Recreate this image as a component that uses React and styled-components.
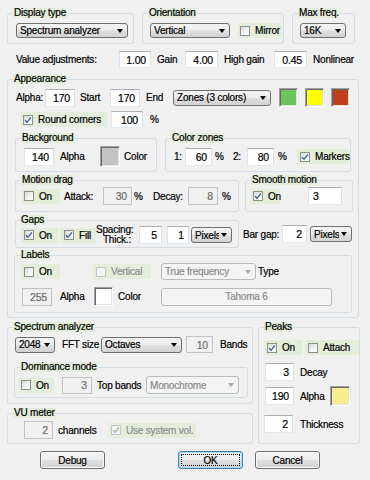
import React from 'react'
import styled, { createGlobalStyle } from 'styled-components'

const GlobalStyle = createGlobalStyle`
	html, body {
		margin: 0;
		padding: 0;
		background: #f0f0f0;
	}
	body {
		font-family: "Liberation Sans", Arial, sans-serif;
		font-size: 10px;
		letter-spacing: -0.2px;
		color: #000;
		-webkit-text-stroke: 0.2px currentColor;
	}
`

const Dialog = styled.div`
	width: 370px;
	height: 480px;
	box-sizing: border-box;
	padding: 8px 0 0 7px;
	background: #f0f0f0;
	display: flex;
	flex-direction: column;
	overflow: hidden;
`

const Line = styled.div`
	display: flex;
	align-items: ${p => p.$align || 'center'};
	margin-top: ${p => p.$top || 0}px;
	margin-left: ${p => p.$left || 0}px;
	height: ${p => (p.$h ? `${p.$h}px` : 'auto')};
	flex: none;
`

const Stack = styled.div`
	display: flex;
	flex-direction: column;
	flex: none;
`

const Group = styled.fieldset`
	box-sizing: border-box;
	flex: none;
	width: ${p => p.$w}px;
	min-width: 0;
	margin: ${p => p.$top || 0}px 0 0 ${p => p.$left || 0}px;
	padding: 0 0 ${p => p.$bottom || 0}px 0;
	border: 1px solid #d5dde4;
	border-radius: 3px;
`

const Caption = styled.legend`
	margin-left: ${p => p.$left ?? 5}px;
	padding: 0 1px;
	height: 10px;
	line-height: 10px;
	background: #e3edda;
	white-space: nowrap;
`

const Text = styled.span`
	flex: none;
	width: ${p => (p.$w ? `${p.$w}px` : 'auto')};
	margin-left: ${p => p.$ml || 0}px;
	white-space: nowrap;
	color: ${p => (p.$muted ? '#8d8d8d' : '#000')};
	text-align: ${p => (p.$right ? 'right' : 'left')};
`

const TwoLine = styled.span`
	flex: none;
	width: ${p => p.$w}px;
	line-height: 10px;
	text-align: right;
	white-space: nowrap;
`

const Field = styled.div`
	box-sizing: border-box;
	flex: none;
	width: ${p => p.$w}px;
	height: ${p => p.$h || 18}px;
	margin-left: ${p => p.$ml || 0}px;
	display: flex;
	align-items: center;
	justify-content: ${p => (p.$start ? 'flex-start' : 'flex-end')};
	padding: 0 4px;
	background: ${p => (p.$disabled ? '#f0f0f0' : '#fff')};
	color: ${p => (p.$disabled ? '#6d6d6d' : '#000')};
	border: 1px solid;
	border-color: ${p => (p.$disabled ? '#c2c2c2' : '#abadb3 #dbdfe6 #e3e9ef #e2e3ea')};
	font-size: 10.5px;
`

const Combo = styled.div`
	box-sizing: border-box;
	flex: none;
	width: ${p => p.$w}px;
	height: ${p => p.$h || 16}px;
	margin-left: ${p => p.$ml || 0}px;
	display: flex;
	align-items: center;
	padding: 0 4px 0 3px;
	border: 1px solid ${p => (p.$disabled ? '#b6bbbe' : '#707070')};
	border-radius: 3px;
	background: ${p =>
		p.$disabled
			? '#f4f4f4'
			: 'linear-gradient(#f4f4f4 0%, #ececec 48%, #dfdfdf 52%, #d2d2d2 100%)'};
	color: ${p => (p.$disabled ? '#8a8a8a' : '#000')};
`

const ComboText = styled.span`
	flex: 1;
	overflow: hidden;
	white-space: nowrap;
`

const Arrow = styled.span`
	flex: none;
	width: 0;
	height: 0;
	margin-left: 2px;
	border-left: 3.5px solid transparent;
	border-right: 3.5px solid transparent;
	border-top: 4px solid ${p => (p.$disabled ? '#a6a6a6' : '#000')};
`

const Check = styled.div`
	box-sizing: border-box;
	flex: none;
	width: ${p => p.$w}px;
	height: 15px;
	margin-left: ${p => p.$ml || 0}px;
	padding-left: ${p => p.$pad ?? 3}px;
	display: flex;
	align-items: center;
	background: #e3edda;
	color: ${p => (p.$disabled ? '#8d8d8d' : '#000')};
	white-space: nowrap;
`

const Box = styled.span`
	box-sizing: border-box;
	flex: none;
	width: 10px;
	height: 10px;
	margin-right: 5px;
	display: flex;
	align-items: center;
	justify-content: center;
	border: 1px solid ${p => (p.$disabled ? '#c4c4c4' : '#8e8f8f')};
	background: ${p =>
		p.$disabled ? '#f4f4f4' : 'linear-gradient(135deg, #d8d8d8 0%, #f4f4f4 60%, #ffffff 100%)'};
`

const Swatch = styled.div`
	box-sizing: border-box;
	flex: none;
	width: ${p => p.$w || 19}px;
	height: ${p => p.$h || 19}px;
	margin-left: ${p => p.$ml || 0}px;
	background: ${p => p.$color};
	border: 1px solid;
	border-color: #a0a0a0 #ffffff #ffffff #a0a0a0;
	box-shadow: inset 1px 1px 0 #696969, inset -1px -1px 0 #e3e3e3;
`

const FontButton = styled.div`
	box-sizing: border-box;
	flex: none;
	width: ${p => p.$w}px;
	height: 18px;
	margin-left: ${p => p.$ml || 0}px;
	display: flex;
	align-items: center;
	justify-content: center;
	border: 1px solid #b6bbbe;
	border-radius: 3px;
	background: #f4f4f4;
	color: #8a8a8a;
`

const PushButton = styled.button`
	box-sizing: border-box;
	flex: none;
	width: 65px;
	height: 18px;
	margin-left: ${p => p.$ml || 0}px;
	padding: 0;
	font: inherit;
	letter-spacing: inherit;
	color: #000;
	border: 1px solid ${p => (p.$default ? '#3c7fb1' : '#707070')};
	border-radius: 3px;
	background: linear-gradient(#f4f4f4 0%, #ececec 48%, #dfdfdf 52%, #d2d2d2 100%);
	box-shadow: inset 0 0 0 1px ${p => (p.$default ? '#a6dcf5' : '#fbfbfb')};
	outline: ${p => (p.$default ? '1px dotted #000' : 'none')};
	outline-offset: -4px;
`

const Tick = ({ muted }) => (
	<svg width="8" height="8" viewBox="0 0 8 8">
		<path
			d="M1.1 4.2 L3 6.3 L6.9 1.5"
			fill="none"
			stroke={muted ? '#b0b0b0' : '#3d5d95'}
			strokeWidth="1.3"
		/>
	</svg>
)

const CheckBox = ({ checked, disabled, children, ...rest }) => (
	<Check $disabled={disabled} {...rest}>
		<Box $disabled={disabled}>{checked && <Tick muted={disabled} />}</Box>
		{children}
	</Check>
)

const Select = ({ children, disabled, ...rest }) => (
	<Combo $disabled={disabled} {...rest}>
		<ComboText>{children}</ComboText>
		<Arrow $disabled={disabled} />
	</Combo>
)

const App = () => {
	return (
		<>
			<GlobalStyle />
			<Dialog>
				<Line $align="flex-start">
					<Group $w={127} $bottom={5}>
						<Caption>Display type</Caption>
						<Line $top={5} $left={8}>
							<Select $w={112} $h={15}>Spectrum analyzer</Select>
						</Line>
					</Group>
					<Group $w={142} $left={8} $bottom={5}>
						<Caption>Orientation</Caption>
						<Line $top={5} $left={7}>
							<Select $w={80} $h={15}>Vertical</Select>
							<CheckBox $w={44} $ml={8} $pad={2}>Mirror</CheckBox>
						</Line>
					</Group>
					<Group $w={63} $left={8} $bottom={5}>
						<Caption>Max freq.</Caption>
						<Line $top={5} $left={7}>
							<Select $w={46} $h={15}>16K</Select>
						</Line>
					</Group>
				</Line>

				<Line $top={7} $left={9} $h={17}>
					<Text $w={103}>Value adjustments:</Text>
					<Field $w={32} $h={17}>1.00</Field>
					<Text $w={28} $ml={6}>Gain</Text>
					<Field $w={33} $h={17}>4.00</Field>
					<Text $w={50} $ml={6}>High gain</Text>
					<Field $w={33} $h={17}>0.45</Field>
					<Text $ml={6}>Nonlinear</Text>
				</Line>

				<Group $w={352} $top={6} $bottom={4}>
					<Caption>Appearance</Caption>

					<Line $top={4} $left={8} $h={19}>
						<Text $w={29}>Alpha:</Text>
						<Field $w={30}>170</Field>
						<Text $w={30} $ml={5}>Start</Text>
						<Field $w={30}>170</Field>
						<Text $w={27} $ml={6}>End</Text>
						<Select $w={98}>Zones (3 colors)</Select>
						<Swatch $ml={8} $color="#6cc45d" />
						<Swatch $ml={7} $color="#ffff00" />
						<Swatch $ml={7} $color="#bf3f1d" />
					</Line>

					<Line $top={4} $left={13} $h={17}>
						<CheckBox checked $w={86} $pad={2}>Round corners</CheckBox>
						<Field $w={32} $h={17} $ml={4}>100</Field>
						<Text $ml={7}>%</Text>
					</Line>

					<Line $top={5} $left={7} $align="flex-start">
						<Group $w={142} $bottom={4}>
							<Caption>Background</Caption>
							<Line $top={3} $left={8} $h={21}>
								<Field $w={30}>140</Field>
								<Text $w={40} $ml={6}>Alpha</Text>
								<Swatch $w={20} $h={21} $color="#c3c3c3" />
								<Text $ml={4}>Color</Text>
							</Line>
						</Group>
						<Group $w={186} $left={8} $bottom={4}>
							<Caption>Color zones</Caption>
							<Line $top={3} $left={8} $h={21}>
								<Text $w={11}>1:</Text>
								<Field $w={27}>60</Field>
								<Text $w={18} $ml={3}>%</Text>
								<Text $w={14}>2:</Text>
								<Field $w={27}>80</Field>
								<Text $w={19} $ml={4}>%</Text>
								<CheckBox checked $w={52}>Markers</CheckBox>
							</Line>
						</Group>
					</Line>

					<Line $top={3} $left={7} $align="flex-start">
						<Group $w={224} $bottom={6}>
							<Caption>Motion drag</Caption>
							<Line $top={2} $left={6} $h={18}>
								<CheckBox $w={38} $pad={2}>On</CheckBox>
								<Text $w={39} $ml={4}>Attack:</Text>
								<Field $w={29} $disabled>30</Field>
								<Text $w={19} $ml={2}>%</Text>
								<Text $w={35}>Decay:</Text>
								<Field $w={30} $disabled>8</Field>
								<Text $ml={4}>%</Text>
							</Line>
						</Group>
						<Group $w={108} $left={6} $bottom={6}>
							<Caption>Smooth motion</Caption>
							<Line $top={2} $left={4} $h={18}>
								<CheckBox checked $w={30}>On</CheckBox>
								<Field $w={34} $ml={28} $start>3</Field>
							</Line>
						</Group>
					</Line>

					<Line $top={3} $left={7} $align="flex-start">
						<Group $w={224} $bottom={2}>
							<Caption $left={4}>Gaps</Caption>
							<Line $left={5} $h={20}>
								<CheckBox checked $w={37}>On</CheckBox>
								<CheckBox checked $w={36} $ml={2} $pad={4}>Fill</CheckBox>
								<TwoLine $w={35}>
									Spacing:
									<br />
									Thick.:
								</TwoLine>
								<Field $w={23} $ml={8}>5</Field>
								<Field $w={22} $ml={5}>1</Field>
								<Select $w={41} $ml={2}>Pixels</Select>
							</Line>
						</Group>
						<Line $top={10} $left={4} $h={18}>
							<Text $w={39}>Bar gap:</Text>
							<Field $w={25}>2</Field>
							<Select $w={42} $ml={3}>Pixels</Select>
						</Line>
					</Line>

					<Group $w={338} $left={6} $top={2} $bottom={6}>
						<Caption>Labels</Caption>
						<Line $top={3} $left={6} $h={17}>
							<CheckBox $w={39}>On</CheckBox>
							<CheckBox $w={58} $ml={33} disabled>Vertical</CheckBox>
							<Select $w={95} $h={17} $ml={10} disabled>True frequency</Select>
							<Text $ml={2}>Type</Text>
						</Line>
						<Line $top={7} $left={7} $h={19}>
							<Field $w={30} $disabled>255</Field>
							<Text $w={34} $ml={8}>Alpha</Text>
							<Swatch $color="#ffffff" />
							<Text $w={38} $ml={5}>Color</Text>
							<FontButton $w={171} $ml={5}>Tahoma 6</FontButton>
						</Line>
					</Group>
				</Group>

				<Line $top={4} $align="flex-start">
					<Stack>
						<Group $w={246} $bottom={5}>
							<Caption>Spectrum analyzer</Caption>
							<Line $top={4} $left={7} $h={17}>
								<Select $w={40}>2048</Select>
								<Text $w={39} $ml={7}>FFT size</Text>
								<Select $w={81}>Octaves</Select>
								<Field $w={27} $h={17} $ml={4} $disabled>10</Field>
								<Text $ml={7}>Bands</Text>
							</Line>
							<Group $w={234} $left={6} $top={9} $bottom={3}>
								<Caption>Dominance mode</Caption>
								<Line $top={4} $left={4} $h={18}>
									<CheckBox $w={35} $pad={2}>On</CheckBox>
									<Field $w={30} $h={17} $ml={8} $disabled>3</Field>
									<Text $w={49} $ml={5}>Top bands</Text>
									<Select $w={93} $h={18} disabled>Monochrome</Select>
								</Line>
							</Group>
						</Group>
						<Group $w={246} $top={4} $bottom={4}>
							<Caption>VU meter</Caption>
							<Line $top={3} $left={16} $h={18}>
								<Field $w={29} $disabled>2</Field>
								<Text $w={50} $ml={5}>channels</Text>
								<CheckBox checked disabled $w={88}>Use system vol.</CheckBox>
							</Line>
						</Group>
					</Stack>

					<Group $w={102} $left={5} $bottom={10}>
						<Caption>Peaks</Caption>
						<Line $top={8} $left={5} $h={15}>
							<CheckBox checked $w={38}>On</CheckBox>
							<CheckBox $w={54} $ml={3}>Attach</CheckBox>
						</Line>
						<Line $top={8} $left={6} $h={18}>
							<Field $w={29}>3</Field>
							<Text $ml={6}>Decay</Text>
						</Line>
						<Line $top={5} $left={6} $h={20}>
							<Field $w={29}>190</Field>
							<Text $w={30} $ml={6}>Alpha</Text>
							<Swatch $w={20} $h={20} $color="#f7f08a" />
						</Line>
						<Line $top={9} $left={5} $h={18}>
							<Field $w={29}>2</Field>
							<Text $ml={7}>Thickness</Text>
						</Line>
					</Group>
				</Line>

				<Line $top={7} $left={33}>
					<PushButton>Debug</PushButton>
					<PushButton $ml={73} $default>OK</PushButton>
					<PushButton $ml={12}>Cancel</PushButton>
				</Line>
			</Dialog>
		</>
	)
}

export default App
